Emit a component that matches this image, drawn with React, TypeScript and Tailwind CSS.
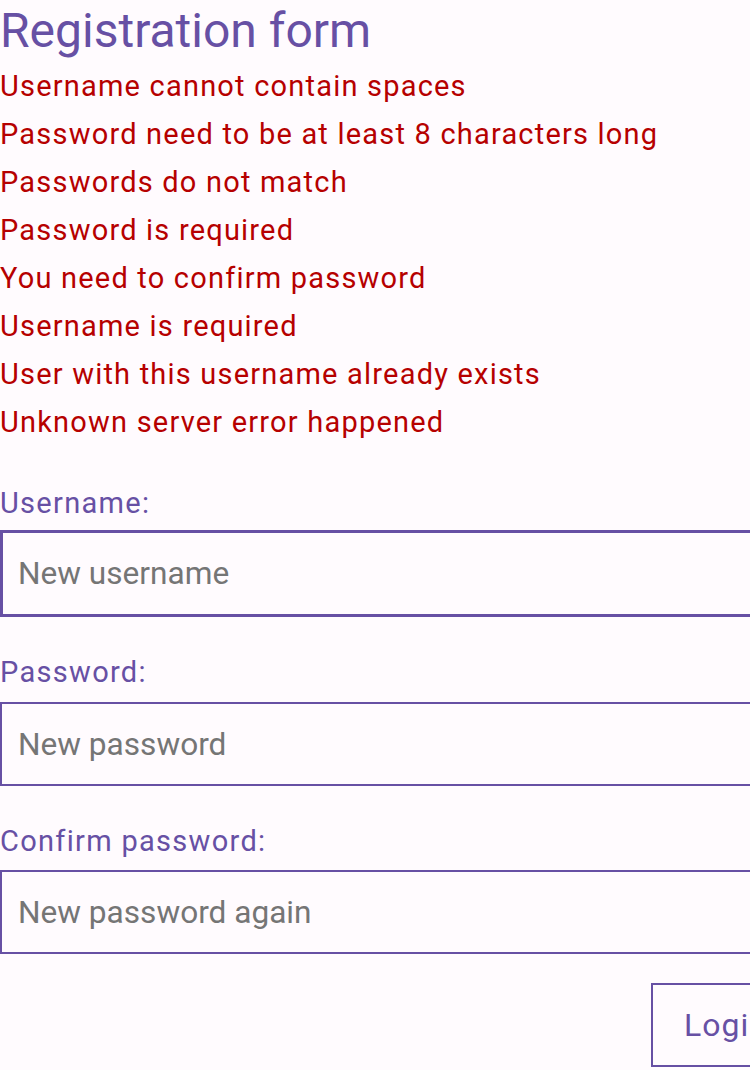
import { useState } from 'react';

const errors = [
  'Username cannot contain spaces',
  'Password need to be at least 8 characters long',
  'Passwords do not match',
  'Password is required',
  'You need to confirm password',
  'Username is required',
  'User with this username already exists',
  'Unknown server error happened',
];

export default function App() {
  const [username, setUsername] = useState('');
  const [password, setPassword] = useState('');
  const [confirm, setConfirm] = useState('');

  return (
    <div className="w-[750px] min-h-[1070px] overflow-hidden bg-[#fffbfe] font-['Roboto',sans-serif]">
      <div className="w-[801px] flex flex-col">
        {/* Title */}
        <h1 className="text-[48px] leading-[62px] text-[#6750a4]">Registration form</h1>

        {/* Error list */}
        <ul className="flex flex-col">
          {errors.map((e) => (
            <li key={e} className="text-[29px] leading-[48px] tracking-[1.2px] text-[#b60000]">
              {e}
            </li>
          ))}
        </ul>

        {/* Username */}
        <label className="mt-[33px] text-[29px] leading-[48px] tracking-[1.3px] text-[#6750a4]">Username:</label>
        <input
          value={username}
          onChange={(e) => setUsername(e.target.value)}
          placeholder="New username"
          className="mt-[3px] h-[87px] w-full border-[3px] border-[#6750a4] bg-transparent pl-[15px] text-[31.6px] text-[#1c1b1f] outline-none placeholder:text-[#757575]"
        />

        {/* Password */}
        <label className="mt-[31px] text-[29px] leading-[48px] tracking-[1.3px] text-[#6750a4]">Password:</label>
        <input
          type="password"
          value={password}
          onChange={(e) => setPassword(e.target.value)}
          placeholder="New password"
          className="mt-[6px] h-[84px] w-full border-2 border-[#6750a4] bg-transparent pl-[16px] text-[31.6px] text-[#1c1b1f] outline-none placeholder:text-[#757575]"
        />

        {/* Confirm password */}
        <label className="mt-[31px] text-[29px] leading-[48px] tracking-[1.3px] text-[#6750a4]">Confirm password:</label>
        <input
          type="password"
          value={confirm}
          onChange={(e) => setConfirm(e.target.value)}
          placeholder="New password again"
          className="mt-[5px] h-[84px] w-full border-2 border-[#6750a4] bg-transparent pl-[16px] text-[31.6px] text-[#1c1b1f] outline-none placeholder:text-[#757575]"
        />

        <div className="mt-[29px] flex justify-end">
          <button className="h-[84px] border-2 border-[#6750a4] px-[31px] text-[32px] tracking-[1px] text-[#6750a4]">
            Login
          </button>
        </div>
      </div>
    </div>
  );
}
